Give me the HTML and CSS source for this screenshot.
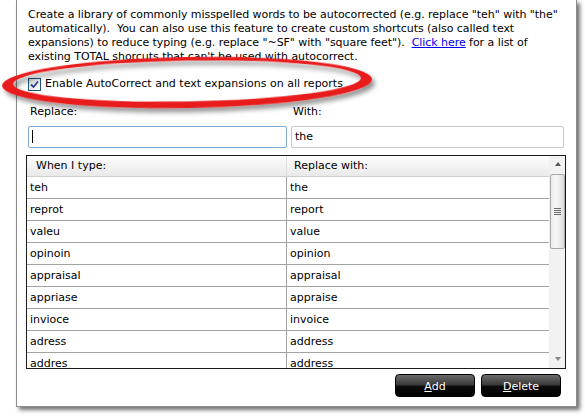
FILE: index.html
```html
<!DOCTYPE html>
<html>
<head>
<meta charset="utf-8">
<link rel="stylesheet" href="styles.css">
</head>
<body>
<div class="panel">
  <p class="intro">Create a library of commonly misspelled words to be autocorrected (e.g. replace "teh" with "the"<br>automatically).&nbsp; You can also use this feature to create custom shortcuts (also called text<br>expansions) to reduce typing (e.g. replace "~SF" with "square feet").&nbsp; <a href="#">Click here</a> for a list of<br>existing TOTAL shorcuts that can't be used with autocorrect.</p>
  <label class="check-row"><span class="checkbox"><svg width="9" height="9" viewBox="0 0 9 9"><path d="M1 4.5 L3.5 7 L8 1.5" fill="none" stroke="#2a3f9c" stroke-width="1.8"/></svg></span>Enable AutoCorrect and text expansions on all reports</label>
  <div class="fields">
    <div class="field field-replace">
      <div class="field-label">Replace:</div>
      <div class="input focused"><span class="caret"></span></div>
    </div>
    <div class="field field-with">
      <div class="field-label">With:</div>
      <div class="input">the</div>
    </div>
  </div>
  <div class="table">
    <div class="grid">
      <div class="head">When I type:</div><div class="head">Replace with:</div>
      <div class="cell">teh</div><div class="cell">the</div>
      <div class="cell">reprot</div><div class="cell">report</div>
      <div class="cell">valeu</div><div class="cell">value</div>
      <div class="cell">opinoin</div><div class="cell">opinion</div>
      <div class="cell">appraisal</div><div class="cell">appraisal</div>
      <div class="cell">appriase</div><div class="cell">appraise</div>
      <div class="cell">invioce</div><div class="cell">invoice</div>
      <div class="cell">adress</div><div class="cell">address</div>
      <div class="cell">addres</div><div class="cell">address</div>
    </div>
    <div class="scrollbar">
      <div class="arrow up"></div>
      <div class="track">
        <div class="thumb"><span class="grip"></span></div>
      </div>
      <div class="arrow down"></div>
    </div>
  </div>
  <div class="buttons">
    <button class="btn"><u>A</u>dd</button>
    <button class="btn"><u>D</u>elete</button>
  </div>
</div>
<svg class="ring" width="385" height="80" viewBox="0 0 385 80">
  <defs>
    <filter id="sh" x="-10%" y="-30%" width="120%" height="180%">
      <feDropShadow dx="3" dy="4" stdDeviation="2.5" flood-color="#000" flood-opacity="0.45"/>
    </filter>
  </defs>
  <g transform="rotate(-1 187 38)" filter="url(#sh)">
    <path fill="#e81b1b" fill-rule="evenodd" d="M2 38.5 A185 25.5 0 1 0 372 38.5 A185 25.5 0 1 0 2 38.5 Z M13 37 A174 20.5 0 1 0 361 37 A174 20.5 0 1 0 13 37 Z"/>
  </g>
</svg>
</body>
</html>
```
FILE: styles.css
```css
html, body {
  margin: 0;
  padding: 0;
  background: #fff;
}
body {
  font-family: "DejaVu Sans", sans-serif;
  font-size: 11px;
  color: #000;
  position: relative;
  width: 585px;
  height: 416px;
  overflow: hidden;
}
.panel {
  margin-left: 16px;
  width: 561px;
  height: 407px;
  box-sizing: border-box;
  border: 1px solid #8c8c8c;
  border-top: none;
  background: #fff;
  box-shadow: 3px 3px 4px rgba(0,0,0,0.55);
  padding: 0 0 0 9px;
  display: flex;
  flex-direction: column;
}
.intro {
  margin: 8px 0 0 2px;
  line-height: 14px;
  white-space: nowrap;
  letter-spacing: -0.05px;
}
.intro a {
  color: #0000ee;
}
.check-row {
  display: flex;
  align-items: center;
  margin: 12px 0 0 2px;
  height: 16px;
  line-height: 16px;
}
.checkbox {
  width: 11px;
  height: 11px;
  border: 1px solid #1c5180;
  background: linear-gradient(135deg, #dcdcd7, #fbfbf8);
  margin-right: 4px;
  display: flex;
  align-items: center;
  justify-content: center;
}
.fields {
  display: flex;
  gap: 4px;
  margin: 13px 0 0 2px;
}
.field-replace { width: 259px; }
.field-with { width: 273px; }
.field-label {
  line-height: 14px;
  margin-left: 2px;
  height: 14px;
}
.input {
  margin-top: 7px;
  height: 22px;
  box-sizing: border-box;
  border: 1px solid #c9c9c9;
  border-radius: 2px;
  line-height: 20px;
  padding-left: 3px;
  background: #fff;
}
.input.focused {
  border-color: #82a9d6;
}
.caret {
  display: inline-block;
  width: 1px;
  height: 13px;
  background: #000;
  vertical-align: middle;
  margin-top: -2px;
}
.table {
  margin-top: 7px;
  width: 540px;
  height: 214px;
  box-sizing: border-box;
  border: 1px solid #1a1a1a;
  display: flex;
  overflow: hidden;
}
.grid {
  width: 522px;
  display: grid;
  grid-template-columns: 260px 262px;
  grid-auto-rows: 22px;
  grid-template-rows: 21px;
  align-content: start;
}
.head {
  background: linear-gradient(#fdfdfd, #f1f1f1 60%, #e9e9e9);
  border-bottom: 1px solid #cfcfcf;
  border-right: 1px solid #e0e0e0;
  padding-left: 9px;
  line-height: 20px;
}
.head:nth-child(2) { padding-left: 7px; border-right: none; }
.cell {
  border-bottom: 1px solid #a3a3a3;
  border-right: 1px solid #a3a3a3;
  line-height: 21px;
  padding-left: 3px;
}
.cell:nth-child(even) { border-right: none; padding-left: 3px; }
.scrollbar {
  width: 16px;
  background: #f2f2f2;
  border-left: 1px solid #f0f0f0;
  display: flex;
  flex-direction: column;
}
.arrow {
  height: 17px;
  position: relative;
}
.arrow::after {
  content: "";
  position: absolute;
  left: 5px;
  width: 0;
  height: 0;
  border-left: 3.5px solid transparent;
  border-right: 3.5px solid transparent;
}
.arrow.up::after { top: 6px; border-bottom: 4px solid #555; }
.arrow.down::after { top: 6px; border-top: 4px solid #888; }
.track {
  flex: 1;
  padding-top: 1px;
}
.thumb {
  height: 75px;
  box-sizing: border-box;
  border: 1px solid #a8a8a8;
  border-radius: 2px;
  background: linear-gradient(90deg, #ececec, #f7f7f7 40%, #dcdcdc);
  display: flex;
  align-items: center;
  justify-content: center;
}
.grip {
  width: 7px;
  height: 7px;
  background: repeating-linear-gradient(#6a6a6a 0 1px, transparent 1px 2px);
}
.buttons {
  display: flex;
  justify-content: flex-end;
  gap: 6px;
  margin: 5px 15px 0 0;
}
.btn {
  width: 80px;
  height: 23px;
  border: 1px solid #000;
  border-radius: 4px;
  background: linear-gradient(#6a6a6a 0%, #3c3c3c 45%, #0b0b0b 55%, #000 100%);
  color: #fff;
  font-family: "DejaVu Sans", sans-serif;
  font-size: 11px;
  padding: 0;
  padding-top: 1px;
}
.ring {
  position: absolute;
  left: 0;
  top: 44px;
  pointer-events: none;
}
```
